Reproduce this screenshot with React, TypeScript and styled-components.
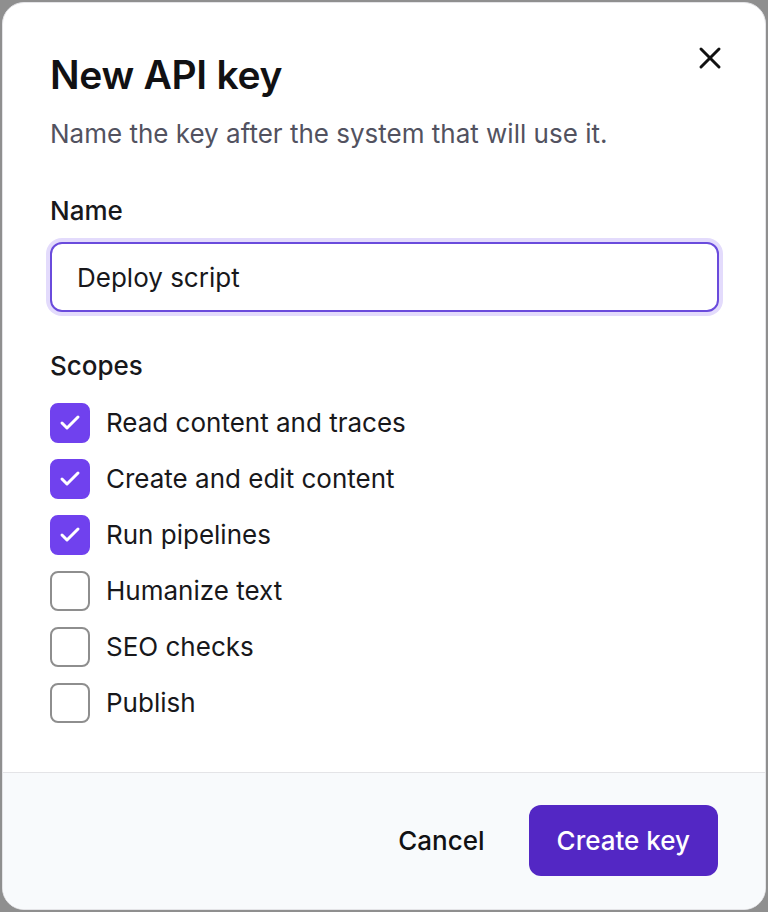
import * as React from "react";
import styled, { createGlobalStyle } from "styled-components";
import { Check, X } from "lucide-react";

const GlobalStyle = createGlobalStyle`
	* { box-sizing: border-box; }
	html, body {
		margin: 0;
		padding: 0;
		background: #8f8f8f;
		font-family: Inter, "Noto Sans", "Liberation Sans", sans-serif;
	}
	#root { padding: 2px; }
`;

const Dialog = styled.div`
	width: 764px;
	height: 908px;
	background: #fff;
	border: 1px solid #e4e4e7;
	border-radius: 22px;
	overflow: hidden;
	display: flex;
	flex-direction: column;
	position: relative;
`;

const Body = styled.div`
	flex: 1;
	padding: 50px 47px 49px 47px;
	display: flex;
	flex-direction: column;
`;

const Title = styled.h1`
	margin: 0;
	font-size: 39px;
	line-height: 44px;
	font-weight: 600;
	color: #111113;
	letter-spacing: -0.3px;
`;

const Subtitle = styled.p`
	margin: 21px 0 0;
	font-size: 26px;
	line-height: 32px;
	color: #525260;
`;

const CloseButton = styled.button`
	position: absolute;
	top: 37px;
	right: 37px;
	width: 36px;
	height: 36px;
	border: none;
	background: none;
	padding: 0;
	display: flex;
	align-items: center;
	justify-content: center;
	color: #111;
	cursor: pointer;
`;

const Label = styled.label<{ $top: number }>`
	display: block;
	margin-top: ${(p) => p.$top}px;
	font-size: 26px;
	line-height: 32px;
	font-weight: 500;
	color: #18181b;
`;

const Input = styled.input`
	margin-top: 15px;
	width: 669px;
	height: 70px;
	border: 2px solid #6a4bdc;
	border-radius: 12px;
	box-shadow: 0 0 0 4px #e3dbfc;
	padding: 0 25px;
	font-family: inherit;
	font-size: 26px;
	color: #18181b;
	outline: none;
`;

const ScopeList = styled.div`
	margin-top: 21px;
	display: flex;
	flex-direction: column;
	gap: 16px;
`;

const ScopeRow = styled.label`
	display: flex;
	align-items: center;
	gap: 16px;
	font-size: 26px;
	line-height: 40px;
	color: #18181b;
	cursor: pointer;
`;

const Box = styled.span<{ $checked: boolean }>`
	width: 40px;
	height: 40px;
	border-radius: 8px;
	display: flex;
	align-items: center;
	justify-content: center;
	background: ${(p) => (p.$checked ? "#7041ee" : "#fff")};
	border: 2px solid ${(p) => (p.$checked ? "#7041ee" : "#8e8e8e")};
	color: #fff;
	flex-shrink: 0;
`;

const Footer = styled.div`
	height: 138px;
	border-top: 1px solid #e4e4e7;
	background: #f8fafc;
	display: flex;
	align-items: center;
	justify-content: flex-end;
	gap: 20px;
	padding: 0 47px 2px;
`;

const Button = styled.button<{ $primary?: boolean }>`
	height: 71px;
	padding: 0 ${(p) => (p.$primary ? 28 : 24)}px;
	border: none;
	border-radius: 12px;
	font-family: inherit;
	font-size: 26px;
	font-weight: 500;
	background: ${(p) => (p.$primary ? "#5327c4" : "transparent")};
	color: ${(p) => (p.$primary ? "#fff" : "#111113")};
	cursor: pointer;
`;

const scopes = [
	{ name: "Read content and traces", checked: true },
	{ name: "Create and edit content", checked: true },
	{ name: "Run pipelines", checked: true },
	{ name: "Humanize text", checked: false },
	{ name: "SEO checks", checked: false },
	{ name: "Publish", checked: false },
];

export default function App() {
	const [name, setName] = React.useState("Deploy script");
	const [checked, setChecked] = React.useState(scopes.map((s) => s.checked));

	return (
		<>
			<GlobalStyle />
			<Dialog>
				<CloseButton aria-label="Close">
					<X size={36} strokeWidth={2} />
				</CloseButton>
				<Body>
					<Title>New API key</Title>
					<Subtitle>Name the key after the system that will use it.</Subtitle>
					<Label $top={45}>Name</Label>
					<Input value={name} onChange={(e) => setName(e.target.value)} />
					<Label $top={38}>Scopes</Label>
					<ScopeList>
						{scopes.map((s, i) => (
							<ScopeRow
								key={s.name}
								onClick={() =>
									setChecked((c) => c.map((v, j) => (j === i ? !v : v)))
								}
							>
								<Box $checked={checked[i]}>
									{checked[i] && <Check size={24} strokeWidth={3} />}
								</Box>
								{s.name}
							</ScopeRow>
						))}
					</ScopeList>
				</Body>
				<Footer>
					<Button>Cancel</Button>
					<Button $primary>Create key</Button>
				</Footer>
			</Dialog>
		</>
	);
}
